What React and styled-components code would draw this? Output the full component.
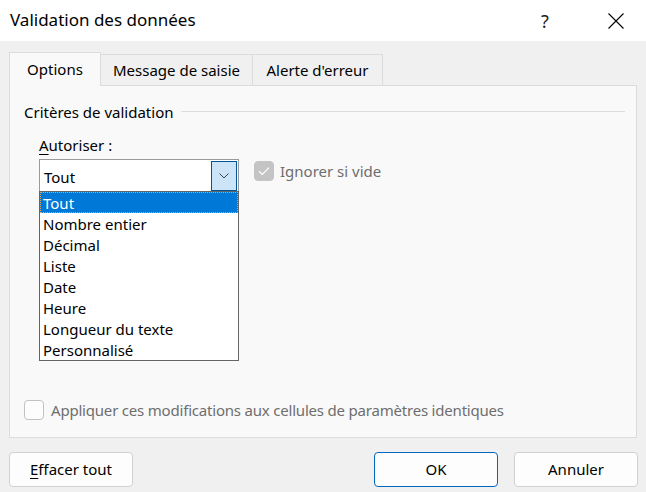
import React from 'react'
import styled, { createGlobalStyle } from 'styled-components'

const Global = createGlobalStyle`
    html, body {
        margin: 0;
        padding: 0;
        background: #f0f0f0;
    }
    body {
        font-family: "Noto Sans", "Open Sans", sans-serif;
        color: #000;
    }
`

const Dialog = styled.div`
    width: 646px;
    height: 492px;
    display: flex;
    flex-direction: column;
    background: #f0f0f0;
`

const TitleBar = styled.div`
    height: 41px;
    flex-shrink: 0;
    background: #fff;
    display: flex;
    align-items: center;
    padding: 0 7px 0 10px;
`

const Title = styled.div`
    flex: 1;
    font-size: 17px;
    margin-top: -2px;
`

const CaptionButton = styled.div`
    width: 46px;
    height: 41px;
    display: flex;
    align-items: center;
    justify-content: center;
    font-size: 18px;
    color: #222;
    margin-left: ${p => p.gap || 0}px;
`

const Body = styled.div`
    flex: 1;
    display: flex;
    flex-direction: column;
    padding: 11px 9px 0 9px;
`

const TabStrip = styled.div`
    display: flex;
    align-items: flex-end;
    height: 34px;
    margin-bottom: -1px;
    position: relative;
    z-index: 1;
`

const Tab = styled.div`
    box-sizing: border-box;
    height: ${p => (p.active ? 34 : 32)}px;
    width: ${p => p.w}px;
    margin-left: ${p => (p.first ? 0 : -1)}px;
    display: flex;
    align-items: center;
    justify-content: center;
    font-size: 15px;
    padding-bottom: ${p => (p.active ? 1 : 0)}px;
    background: ${p => (p.active ? '#f9f9f9' : '#f0f0f0')};
    border: 1px solid #dcdcdc;
    border-bottom: ${p => (p.active ? 'none' : '1px solid #dcdcdc')};
`

const Panel = styled.div`
    box-sizing: border-box;
    height: 353px;
    background: #f9f9f9;
    border: 1px solid #dcdcdc;
    display: flex;
    flex-direction: column;
    position: relative;
`

const GroupHeader = styled.div`
    display: flex;
    align-items: center;
    gap: 7px;
    margin: 16px 11px 0 14px;
    font-size: 15px;
    line-height: 20px;
`

const Rule = styled.div`
    flex: 1;
    height: 1px;
    background: #dcdcdc;
    margin-top: -2px;
`

const Section = styled.div`
    margin-left: 29px;
`

const Label = styled.div`
    margin-top: 13px;
    font-size: 15px;
    line-height: 20px;
    height: 20px;
`

const Key = styled.span`
    text-decoration: underline;
    text-underline-offset: 3px;
`

const FieldRow = styled.div`
    display: flex;
    align-items: flex-start;
    margin-top: 4px;
`

const ComboWrap = styled.div`
    position: relative;
    width: 200px;
`

const Combo = styled.div`
    box-sizing: border-box;
    height: 33px;
    background: #fff;
    border: 1px solid #9a9a9a;
    display: flex;
    align-items: center;
    padding: 0 1px 0 4px;
    font-size: 15px;
`

const ComboValue = styled.div`
    flex: 1;
    padding-top: 2px;
`

const DropButton = styled.div`
    box-sizing: border-box;
    width: 26px;
    height: 30px;
    margin-top: 1px;
    background: #cce4f7;
    border: 1px solid #005499;
    display: flex;
    align-items: center;
    justify-content: center;
`

const ListBox = styled.div`
    position: absolute;
    top: calc(100% - 1px);
    left: 0;
    width: 200px;
    box-sizing: border-box;
    background: #fff;
    border: 1px solid #646464;
    z-index: 2;
`

const Option = styled.div`
    box-sizing: border-box;
    height: 21px;
    line-height: 21px;
    padding: 1px 0 0 3px;
    font-size: 15px;
    background: ${p => (p.selected ? '#0078d7' : 'transparent')};
    color: ${p => (p.selected ? '#fff' : '#000')};
    outline: ${p => (p.selected ? '1px dotted #e8a45c' : 'none')};
    outline-offset: -1px;
`

const CheckRow = styled.label`
    display: flex;
    align-items: center;
    gap: ${p => p.gap || 6}px;
    font-size: 15px;
    letter-spacing: ${p => p.tight ? '-0.2px' : 'normal'};
    color: #6e6e6e;
    margin: ${p => p.margin || 0};
`

const Box = styled.span`
    box-sizing: border-box;
    width: 20px;
    height: 20px;
    border-radius: 4px;
    display: flex;
    align-items: center;
    justify-content: center;
    background: ${p => (p.checked ? '#c4c4c4' : '#fdfdfd')};
    border: 1px solid ${p => (p.checked ? '#c4c4c4' : '#c2c2c2')};
`

const ButtonRow = styled.div`
    display: flex;
    margin: 14px -1px 0 0;
    gap: 16px;
`

const Button = styled.button`
    box-sizing: border-box;
    width: 124px;
    height: 35px;
    background: #fdfdfd;
    border: 1px solid ${p => (p.primary ? '#0067c0' : '#d0d0d0')};
    border-radius: 4px;
    font-family: inherit;
    font-size: 15px;
    color: #000;
    padding: 0 0 1px 0;
    margin-left: ${p => (p.push ? 'auto' : 0)};
`

const options = [
    'Tout',
    'Nombre entier',
    'Décimal',
    'Liste',
    'Date',
    'Heure',
    'Longueur du texte',
    'Personnalisé',
]

function Check() {
    return (
        <svg width="12" height="10" viewBox="0 0 12 10">
            <path d="M1 5.2 L4.3 8.4 L11 1.6" fill="none" stroke="#fff" strokeWidth="1.2" />
        </svg>
    )
}

export default function App() {
    return (
        <Dialog>
            <Global />
            <TitleBar>
                <Title>Validation des données</Title>
                <CaptionButton>?</CaptionButton>
                <CaptionButton gap={25}>
                    <svg width="16" height="16" viewBox="0 0 16 16">
                        <path d="M0.5 0.5 L15.5 15.5 M15.5 0.5 L0.5 15.5" stroke="#000" strokeWidth="1.1" />
                    </svg>
                </CaptionButton>
            </TitleBar>
            <Body>
                <TabStrip>
                    <Tab first active w={92}>Options</Tab>
                    <Tab w={153}>Message de saisie</Tab>
                    <Tab w={131}>Alerte d'erreur</Tab>
                </TabStrip>
                <Panel>
                    <GroupHeader>
                        Critères de validation
                        <Rule />
                    </GroupHeader>
                    <Section>
                        <Label><Key>A</Key>utoriser :</Label>
                        <FieldRow>
                            <ComboWrap>
                                <Combo>
                                    <ComboValue>Tout</ComboValue>
                                    <DropButton>
                                        <svg width="10" height="6" viewBox="0 0 10 6">
                                            <path d="M0.5 0.5 L5 5 L9.5 0.5" fill="none" stroke="#404040" strokeWidth="1" />
                                        </svg>
                                    </DropButton>
                                </Combo>
                                <ListBox>
                                    {options.map((o, i) => (
                                        <Option key={o} selected={i === 0}>{o}</Option>
                                    ))}
                                </ListBox>
                            </ComboWrap>
                            <CheckRow margin="2px 0 0 15px">
                                <Box checked><Check /></Box>
                                Ignorer si vide
                            </CheckRow>
                        </FieldRow>
                    </Section>
                    <CheckRow margin="auto 0 17px 14px" gap={7} tight>
                        <Box />
                        Appliquer ces modifications aux cellules de paramètres identiques
                    </CheckRow>
                </Panel>
                <ButtonRow>
                    <Button><Key>E</Key>ffacer tout</Button>
                    <Button primary push>OK</Button>
                    <Button>Annuler</Button>
                </ButtonRow>
            </Body>
        </Dialog>
    )
}
